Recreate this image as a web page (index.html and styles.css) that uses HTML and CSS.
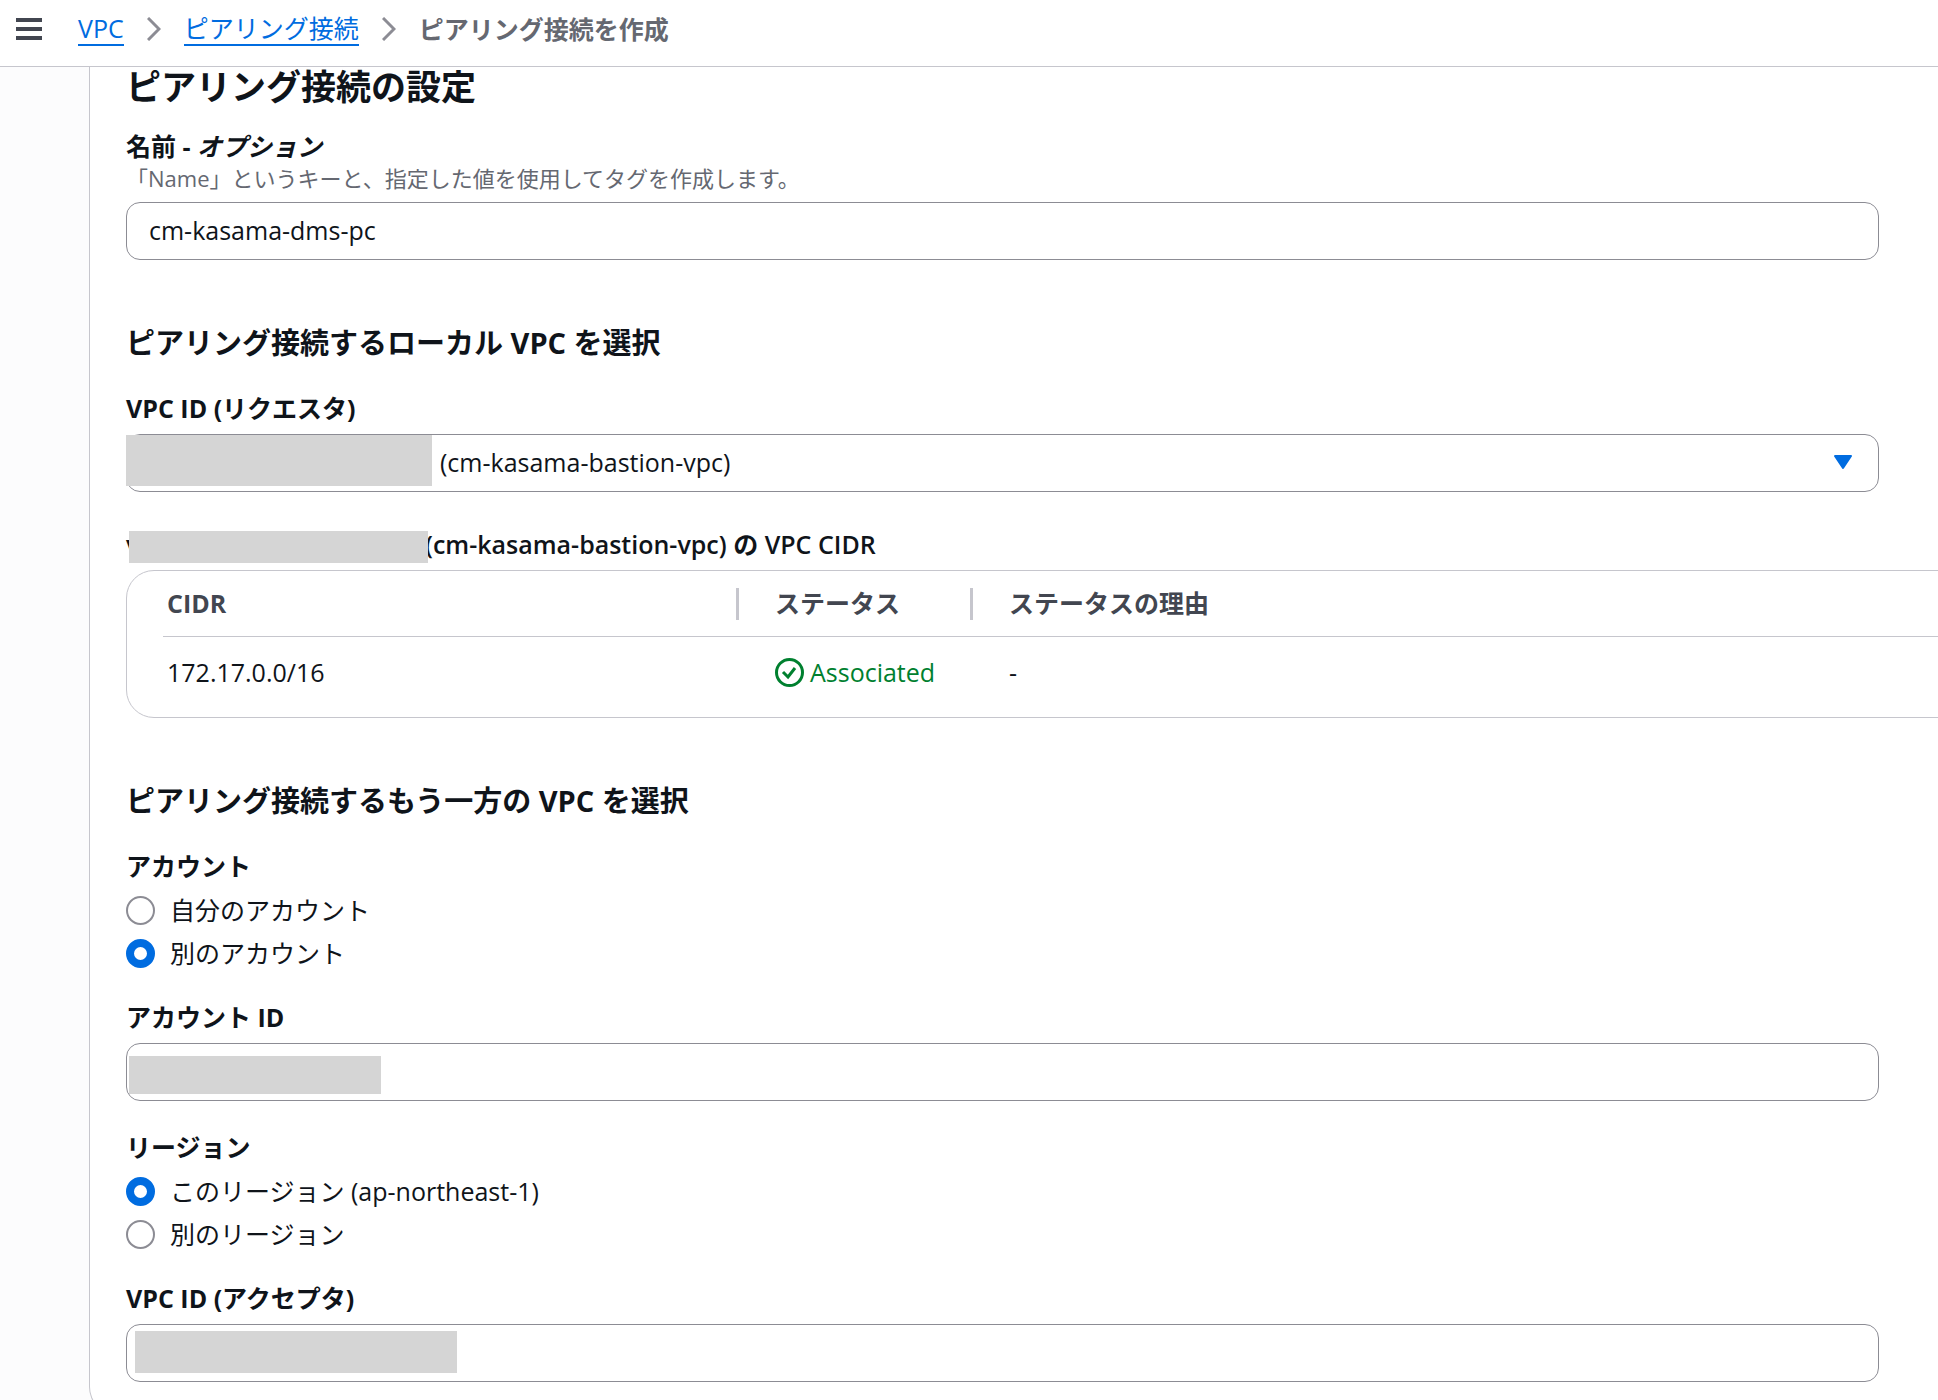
FILE: index.html
```html
<!DOCTYPE html>
<html lang="ja">
  <head>
    <meta charset="UTF-8" />
    <meta name="viewport" content="width=device-width, initial-scale=1.0" />
    <title>ピアリング接続を作成</title>
    <link rel="stylesheet" href="styles.css">
  </head>

  <body>
    <header class="topbar">
      <button class="menu-btn" type="button" aria-label="メニュー">
        <svg width="26" height="22" viewBox="0 0 26 22">
          <path d="M0 2h26M0 11h26M0 20h26" stroke="#424650" stroke-width="4" />
        </svg>
      </button>
      <nav class="breadcrumb">
        <a href="#">VPC</a>
        <svg class="chevron" width="14" height="24" viewBox="0 0 14 24">
          <path d="M1 1l11 11L1 23" fill="none" stroke="#8c8c94" stroke-width="3" />
        </svg>
        <a href="#">ピアリング接続</a>
        <svg class="chevron" width="14" height="24" viewBox="0 0 14 24">
          <path d="M1 1l11 11L1 23" fill="none" stroke="#8c8c94" stroke-width="3" />
        </svg>
        <span class="current">ピアリング接続を作成</span>
      </nav>
    </header>

    <main class="page">
      <form class="card">
        <h2>ピアリング接続の設定</h2>

        <div class="field">
          <label for="name">名前 - <em>オプション</em></label>
          <p class="hint">「Name」というキーと、指定した値を使用してタグを作成します。</p>
          <input type="text" id="name" value="cm-kasama-dms-pc" />
        </div>

        <!-- Requester -->
        <section>
          <h3>ピアリング接続するローカル VPC を選択</h3>
          <div class="field">
            <label for="requester">VPC ID (リクエスタ)</label>
            <div class="control">
              <select id="requester">
                <option>(cm-kasama-bastion-vpc)</option>
              </select>
              <span class="mask mask-select"></span>
              <svg class="arrow" width="20" height="16" viewBox="0 0 20 16">
                <path d="M2 2h16L10 14z" fill="#006ce0" stroke="#006ce0" stroke-width="2" stroke-linejoin="round" />
              </svg>
            </div>
          </div>

          <div class="cidr">
            <p class="label"><span class="masked-id">v<span class="mask mask-label"></span></span>(cm-kasama-bastion-vpc) の VPC CIDR</p>
            <div class="table-box">
              <table>
                <thead>
                  <tr>
                    <th class="col-cidr">CIDR</th>
                    <th class="col-status">ステータス</th>
                    <th>ステータスの理由</th>
                  </tr>
                </thead>
                <tbody>
                  <tr>
                    <td>172.17.0.0/16</td>
                    <td>
                      <span class="status">
                        <svg width="29" height="29" viewBox="0 0 29 29" fill="none" stroke="#00802f" stroke-width="3">
                          <circle cx="14.500" cy="14.500" r="13" />
                          <path d="M8 14l5 5 7-9" />
                        </svg>
                        Associated
                      </span>
                    </td>
                    <td>-</td>
                  </tr>
                </tbody>
              </table>
            </div>
          </div>
        </section>

        <!-- Accepter -->
        <section>
          <h3>ピアリング接続するもう一方の VPC を選択</h3>
          <fieldset class="field">
            <legend>アカウント</legend>
            <div class="radios">
              <label><input type="radio" name="account" />自分のアカウント</label>
              <label><input type="radio" name="account" checked />別のアカウント</label>
            </div>
          </fieldset>

          <div class="field">
            <label for="account-id">アカウント ID</label>
            <div class="control">
              <input type="text" id="account-id" />
              <span class="mask mask-account"></span>
            </div>
          </div>

          <fieldset class="field">
            <legend>リージョン</legend>
            <div class="radios">
              <label><input type="radio" name="region" checked />このリージョン (ap-northeast-1)</label>
              <label><input type="radio" name="region" />別のリージョン</label>
            </div>
          </fieldset>

          <div class="field">
            <label for="accepter">VPC ID (アクセプタ)</label>
            <div class="control">
              <input type="text" id="accepter" />
              <span class="mask mask-accepter"></span>
            </div>
          </div>
        </section>
      </form>
    </main>
  </body>
</html>
```

FILE: styles.css
```css
* {
  box-sizing: border-box;
}

body {
  margin: 0;
  height: 100vh;
  overflow: hidden;
  background: #fcfcfd;
  color: #0f141a;
  font-family: "Open Sans", "Noto Sans CJK JP", sans-serif;
  font-size: 25px;
  line-height: 36px;
}

h2,
h3,
p {
  margin: 0;
}

/* Top bar */
.topbar {
  display: flex;
  align-items: center;
  height: 67px;
  padding: 0 16px 8px;
  background: #fff;
  border-bottom: 1px solid #c6c6cd;
}

.menu-btn {
  display: flex;
  padding: 0;
  border: none;
  background: none;
  cursor: pointer;
}

.breadcrumb {
  display: flex;
  align-items: center;
  gap: 23px;
  margin-left: 36px;
}

.breadcrumb a {
  color: #006ce0;
  line-height: 32px;
  text-decoration: none;
  border-bottom: 2px solid #006ce0;
}

.current {
  color: #656871;
  font-weight: 700;
}

/* Card */
.page {
  padding-left: 89px;
}

.card {
  padding: 0 59px 32px 36px;
  background: #fff;
  border-left: 1px solid #c6c6cd;
  border-bottom: 1px solid #c6c6cd;
  border-bottom-left-radius: 28px;
}

h2 {
  margin-bottom: 22px;
  font-size: 35px;
  line-height: 40px;
}

h3 {
  margin-bottom: 30px;
  font-size: 29px;
}

section {
  margin-top: 65px;
}

/* Fields */
.field {
  margin: 0;
  padding: 0;
  border: none;
}

.field + .field {
  margin-top: 29px;
}

.field > label,
.label,
legend {
  display: block;
  margin-bottom: 9px;
  padding: 0;
  font-weight: 700;
  line-height: 34px;
}

.label {
  font-weight: 600;
}

.field > label:has(+ .hint) {
  margin-bottom: 0;
}

.hint {
  margin-bottom: 9px;
  color: #656871;
  font-size: 22px;
  line-height: 30px;
}

.control {
  position: relative;
}

input[type="text"],
select {
  display: block;
  width: 100%;
  height: 58px;
  padding: 0 22px 2px;
  border: 1px solid #8c8c94;
  border-radius: 14px;
  background: #fff;
  color: #0f141a;
  font: inherit;
}

select {
  padding-left: 313px;
  appearance: none;
}

.arrow {
  position: absolute;
  top: 20px;
  right: 26px;
  pointer-events: none;
}

/* Hidden ids */
.mask {
  position: absolute;
  background: #d5d5d5;
}

.mask-select {
  top: 1px;
  left: 0;
  width: 306px;
  height: 51px;
}

.masked-id {
  display: inline-block;
  position: relative;
  width: 299px;
}

.mask-label {
  top: 4px;
  left: 3px;
  width: 299px;
  height: 32px;
}

.mask-account {
  top: 13px;
  left: 3px;
  width: 252px;
  height: 38px;
}

.mask-accepter {
  top: 7px;
  left: 9px;
  width: 322px;
  height: 42px;
}

/* CIDR table */
.cidr {
  margin-top: 35px;
}

.table-box {
  margin-right: -96px;
  padding: 0 36px 9px;
  border: 1px solid #c6c6cd;
  border-radius: 28px;
}

table {
  width: 100%;
  border-collapse: collapse;
  table-layout: fixed;
}

th,
td {
  padding: 0 4px;
  text-align: left;
}

th {
  position: relative;
  height: 65px;
  color: #424650;
  border-bottom: 1px solid #c6c6cd;
}

td {
  height: 72px;
}

th + th,
td + td {
  padding-left: 39px;
}

.col-cidr {
  width: 573px;
}

.col-status {
  width: 234px;
}

/* Column divider */
th + th::before {
  content: "";
  position: absolute;
  top: 17px;
  left: 0;
  width: 3px;
  height: 32px;
  background: #c6c6cd;
}

.status {
  display: flex;
  align-items: center;
  gap: 6px;
  color: #00802f;
}

/* Radios */
.radios {
  display: flex;
  flex-direction: column;
  gap: 7px;
}

.radios label {
  display: flex;
  align-items: center;
  gap: 15px;
}

input[type="radio"] {
  appearance: none;
  width: 29px;
  height: 29px;
  margin: 0;
  border: 2px solid #8c8c94;
  border-radius: 50%;
  background: #fff;
}

input[type="radio"]:checked {
  border: 8px solid #006ce0;
}
```
